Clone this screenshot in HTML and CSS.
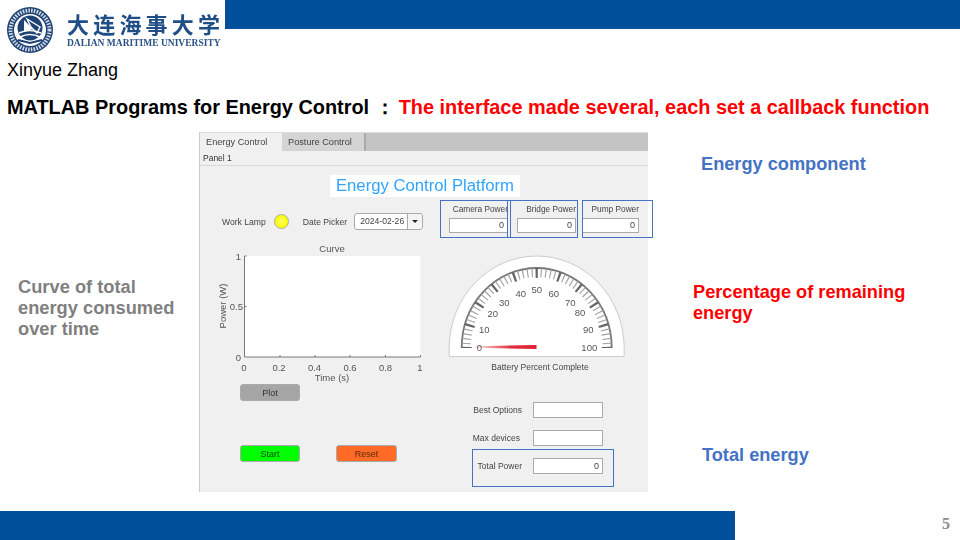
FILE: index.html
```html
<!DOCTYPE html>
<html lang="en">
  <head>
    <meta charset="UTF-8" />
    <meta name="viewport" content="width=device-width, initial-scale=1.0" />
    <title>MATLAB Programs for Energy Control</title>
    <link rel="stylesheet" href="styles.css">
  </head>
  <body>
    <div class="slide">
      <header class="top">
        <div class="logo">
          <svg class="seal" width="60" height="56" viewBox="0 0 60 56">
            <circle cx="30" cy="30" r="23" fill="#1d4273" />
            <circle cx="30" cy="30" r="19.5" fill="none" stroke="#cfd8e4" stroke-width="4" stroke-dasharray="1.6 1.2" />
            <circle cx="30" cy="30" r="16" fill="#fff" />
            <circle cx="30" cy="28" r="12.5" fill="#1d4273" />
            <path d="M24 20 L33 29 L24 32 Z" fill="#fff" />
            <path d="M27 19 L40 27 L37 33 L31 27 Z" fill="none" stroke="#fff" stroke-width="1.4" />
            <path d="M19 33 Q30 28 41 33 M20 37 Q30 32 40 37" fill="none" stroke="#fff" stroke-width="1.6" />
            <path d="M18 40 L30 43 L42 40" fill="none" stroke="#1d4273" stroke-width="2" />
          </svg>
          <div class="logo-text">
            <div class="logo-cn">大连海事大学</div>
            <div class="logo-en">DALIAN MARITIME UNIVERSITY</div>
          </div>
        </div>
        <div class="top-bar"></div>
      </header>

      <div class="author">Xinyue Zhang</div>
      <h1 class="title">MATLAB Programs for Energy Control ：<span class="title-red">The interface made several, each set a callback function</span></h1>

      <main class="middle">
        <div class="note-left">Curve of total energy consumed over time</div>

        <div class="app-wrap">
          <div class="app">
            <div class="tabs">
              <div class="tab tab-on">Energy Control</div>
              <div class="tab">Posture Control</div>
            </div>
            <div class="panel-label">Panel 1</div>
            <div class="heading">Energy Control Platform</div>
            <div class="app-body">
              <div class="col-left">
                <div class="lamp-row">
                  <span class="lamp-label">Work Lamp</span>
                  <span class="lamp"></span>
                  <span class="date-label">Date Picker</span>
                  <span class="date-picker">
                    <span class="date-value">2024-02-26</span>
                    <span class="date-btn"></span>
                  </span>
                </div>

                <svg class="chart" width="235" height="144" viewBox="0 0 235 144">
                  <rect x="44.5" y="16" width="176" height="101" fill="#fff" />
                  <path d="M44.5 16 V117 H220.5" fill="none" stroke="#777" stroke-width="1" />
                  <path d="M44.5 16 h2 M44.5 66.5 h2 M80 117 v-2 M115 117 v-2 M150 117 v-2 M185.500 117 v-2 M220.500 117 v-2" stroke="#777" stroke-width="1" />
                  <text class="chart-text" x="132" y="12" text-anchor="middle">Curve</text>
                  <text class="chart-text" x="41" y="20" text-anchor="end">1</text>
                  <text class="chart-text" x="43" y="70" text-anchor="end">0.5</text>
                  <text class="chart-text" x="41" y="120.500" text-anchor="end">0</text>
                  <text class="chart-text" x="44" y="130.500" text-anchor="middle">0</text>
                  <text class="chart-text" x="79" y="130.500" text-anchor="middle">0.2</text>
                  <text class="chart-text" x="114.500" y="130.500" text-anchor="middle">0.4</text>
                  <text class="chart-text" x="150" y="130.500" text-anchor="middle">0.6</text>
                  <text class="chart-text" x="185.500" y="130.500" text-anchor="middle">0.8</text>
                  <text class="chart-text" x="220" y="130.500" text-anchor="middle">1</text>
                  <text class="chart-text" x="132" y="141" text-anchor="middle">Time (s)</text>
                  <text class="chart-text" transform="translate(25.500 66) rotate(-90)" text-anchor="middle">Power (W)</text>
                </svg>

                <button class="btn btn-plot">Plot</button>
                <div class="btn-row">
                  <button class="btn btn-start">Start</button>
                  <button class="btn btn-reset">Reset</button>
                </div>
              </div>

              <div class="col-right">
                <div class="powers">
                  <div class="power power-a">
                    <div class="power-label">Camera Power</div>
                    <div class="field">0</div>
                  </div>
                  <div class="power power-a">
                    <div class="power-label">Bridge Power</div>
                    <div class="field">0</div>
                  </div>
                  <div class="power power-b">
                    <div class="power-label">Pump Power</div>
                    <div class="field">0</div>
                  </div>
                </div>

                <svg class="gauge" width="185" height="106" viewBox="0 0 185 106">
                  <defs>
                    <linearGradient id="needle" x1="0" x2="1" y1="0" y2="0">
                      <stop offset="0" stop-color="#e0202e" stop-opacity="0" />
                      <stop offset="0.6" stop-color="#e0303c" />
                      <stop offset="1" stop-color="#e0202e" />
                    </linearGradient>
                  </defs>
                  <path d="M4.200 104.500 V96 A87.500 92 0 0 1 179.200 96 V104.500 Z" fill="#fff" stroke="#ccc" stroke-width="1" />
                  <path d="M16.700 96 A75 80 0 0 1 166.700 96" fill="none" stroke="#777" stroke-width="1.800" />
                  <path d="M21.200 96 A70.500 75.500 0 0 1 162.200 96" fill="none" stroke="#a0a0a0" stroke-width="9" pathLength="1000" stroke-dasharray="5 15" stroke-dashoffset="2.500" />
                  <path d="M21.700 96 A70 75 0 0 1 161.700 96" fill="none" stroke="#666" stroke-width="10" pathLength="1000" stroke-dasharray="10 90" stroke-dashoffset="5" />
                  <polygon points="27,94.300 91.500,93 91.500,97 27,95.700" fill="url(#needle)" />
                  <text class="gauge-text" x="34.300" y="96">0</text>
                  <text class="gauge-text" x="39.300" y="78.700">10</text>
                  <text class="gauge-text" x="47.700" y="62">20</text>
                  <text class="gauge-text" x="59.300" y="51">30</text>
                  <text class="gauge-text" x="75.700" y="42">40</text>
                  <text class="gauge-text" x="91.700" y="38.300">50</text>
                  <text class="gauge-text" x="108.700" y="42">60</text>
                  <text class="gauge-text" x="125.300" y="51">70</text>
                  <text class="gauge-text" x="135" y="61.300">80</text>
                  <text class="gauge-text" x="143.300" y="78.700">90</text>
                  <text class="gauge-text" x="144.300" y="96">100</text>
                </svg>
                <div class="gauge-label">Battery Percent Complete</div>

                <div class="form">
                  <label class="form-label">Best Options</label>
                  <div class="field"></div>
                  <label class="form-label form-label-max">Max devices</label>
                  <div class="field"></div>
                  <label class="form-label">Total Power</label>
                  <div class="field">0</div>
                </div>
              </div>
            </div>
          </div>
          <div class="outline outline-camera"></div>
          <div class="outline outline-bridge"></div>
          <div class="outline outline-pump"></div>
          <div class="outline outline-total"></div>
        </div>

        <div class="notes-right">
          <div class="note note-blue note-energy">Energy component</div>
          <div class="note note-red">Percentage of remaining energy</div>
          <div class="note note-blue note-total">Total energy</div>
        </div>
      </main>

      <footer class="bottom">
        <div class="bottom-bar"></div>
        <div class="page-num">5</div>
      </footer>
    </div>
  </body>
</html>
```

FILE: styles.css
```css
* {
  box-sizing: border-box;
}

body {
  margin: 0;
  font-family: "Liberation Sans", Arial, sans-serif;
  background-color: white;
}

.slide {
  width: 960px;
  height: 540px;
  overflow: hidden;
  display: flex;
  flex-direction: column;
}

/* header */
.top {
  display: flex;
  height: 56px;
}

.logo {
  width: 225px;
  display: flex;
  filter: blur(0.4px);
}

.logo-text {
  padding: 8px 0 0 7px;
}

.logo-cn {
  font-family: "Noto Sans CJK SC", sans-serif;
  font-weight: 700;
  font-size: 22px;
  line-height: 30px;
  letter-spacing: 4.2px;
  color: #1f4d86;
  white-space: nowrap;
}

.logo-en {
  font-family: "Liberation Serif", serif;
  font-weight: 700;
  font-size: 9.500px;
  line-height: 11px;
  color: #2a5285;
  white-space: nowrap;
}

.top-bar {
  flex: 1;
  height: 29px;
  background-color: #004f9a;
}

.author {
  margin: 5px 0 0 7px;
  font-size: 18px;
  line-height: 18px;
  color: black;
}

.title {
  margin: 17px 0 0 7px;
  font-size: 19.900px;
  line-height: 22px;
  font-weight: 700;
  color: black;
  white-space: nowrap;
}

.title-red {
  color: #ff0000;
  margin-left: 4px;
}

/* middle row */
.middle {
  height: 360px;
  margin-top: 14px;
  display: grid;
  grid-template-columns: 199px 449px 1fr;
}

.note-left {
  margin-top: 144px;
  padding-left: 18px;
  width: 190px;
  font-size: 18.300px;
  line-height: 21px;
  font-weight: 700;
  color: #7f7f7f;
}

.notes-right {
  display: flex;
  flex-direction: column;
}

.note {
  font-size: 18.200px;
  line-height: 21px;
  font-weight: 700;
}

.note-blue {
  color: #4472c4;
}

.note-red {
  color: #ff0000;
  margin: 107px 0 0 45px;
  width: 230px;
}

.note-energy {
  margin: 22px 0 0 53px;
}

.note-total {
  margin: 121px 0 0 54px;
}

/* matlab app */
.app-wrap {
  position: relative;
}

.app {
  height: 360px;
  background-color: #f0f0f0;
  border-left: 1px solid #ccc;
  border-top: 1px solid #ddd;
  color: #444;
  filter: blur(0.45px);
}

.tabs {
  display: flex;
  height: 18px;
  background-color: #c4c4c4;
}

.tab {
  width: 84px;
  padding-left: 6px;
  font-size: 9.200px;
  line-height: 18px;
  background-color: #d4d4d4;
  border-right: 2px solid #aaa;
}

.tab-on {
  width: 82px;
  background-color: #f0f0f0;
  border-right: 0;
}

.panel-label {
  height: 15px;
  padding-left: 3px;
  font-size: 8.500px;
  line-height: 14px;
  color: #333;
  border-bottom: 1px solid #d8d8d8;
}

.heading {
  width: 190px;
  height: 22px;
  margin: 9px 0 0 130px;
  background-color: white;
  font-size: 16.700px;
  line-height: 22px;
  text-align: center;
  color: #2ea4ff;
  white-space: nowrap;
}

.app-body {
  display: flex;
}

.col-left {
  width: 240px;
}

.lamp-row {
  display: flex;
  align-items: center;
  height: 17px;
  margin-top: 16px;
  padding-left: 22px;
  font-size: 8.600px;
}

.lamp {
  width: 15px;
  height: 15px;
  margin-left: 8px;
  border-radius: 50%;
  border: 1px solid #aaa;
  background: radial-gradient(circle, #ffff66, #ffff00 70%);
}

.date-label {
  margin-left: 14px;
}

.date-picker {
  display: flex;
  width: 69px;
  height: 17px;
  margin-left: 7px;
  background-color: white;
  border: 1px solid #aaa;
  border-radius: 3px;
}

.date-value {
  flex: 1;
  padding-left: 5px;
  line-height: 15px;
  white-space: nowrap;
}

.date-btn {
  width: 15px;
  position: relative;
  border-left: 1px solid #aaa;
  background-color: #f4f4f4;
  border-radius: 0 3px 3px 0;
}

.date-btn::after {
  content: "";
  position: absolute;
  left: 4px;
  top: 6px;
  border-left: 3px solid transparent;
  border-right: 3px solid transparent;
  border-top: 3px solid #222;
}

.chart {
  display: block;
  margin-top: 10px;
}

.chart-text {
  font-size: 9.500px;
  fill: #555;
}

.btn {
  display: block;
  height: 17px;
  width: 60px;
  padding: 0;
  font-family: inherit;
  font-size: 9px;
  color: #333;
  border: 1px solid #aaa;
  border-radius: 3px;
}

.btn-plot {
  margin-left: 40px;
  background-color: #a5a5a5;
}

.btn-row {
  display: flex;
  gap: 36px;
  margin: 44px 0 0 40px;
}

.btn-start {
  background-color: #00ff00;
  color: #0a4a0a;
}

.btn-reset {
  width: 61px;
  background-color: #ff6a26;
  color: #5a2a10;
}

.col-right {
  flex: 1;
}

.powers {
  display: flex;
  gap: 9px;
  margin: 6px 0 0 9px;
}

.power {
  width: 59px;
}

.power-b {
  width: 57px;
  margin-left: -3px;
}

.power-label {
  height: 15px;
  font-size: 8.300px;
  line-height: 12px;
  text-align: right;
  white-space: nowrap;
}

.field {
  height: 15px;
  padding-right: 3px;
  background-color: white;
  border: 1px solid #aaa;
  font-size: 9px;
  line-height: 13px;
  text-align: right;
}

.gauge {
  display: block;
  margin: 19px 0 0 5px;
}

.gauge-text {
  font-size: 9.500px;
  fill: #555;
  text-anchor: middle;
  dominant-baseline: middle;
}

.gauge-label {
  margin: 3px 0 0;
  width: 200px;
  font-size: 8.500px;
  line-height: 12px;
  text-align: center;
}

.form {
  display: grid;
  grid-template-columns: 82px 70px;
  column-gap: 11px;
  row-gap: 12px;
  margin-top: 29px;
}

.form .field {
  height: 16px;
  line-height: 14px;
}

.form-label {
  padding-top: 1px;
  font-size: 8.500px;
  line-height: 15px;
  text-align: right;
}

.form-label-max {
  padding-right: 2px;
}

/* blue callout boxes drawn over the app */
.outline {
  position: absolute;
  border: 1px solid #4472c4;
  top: 68px;
  height: 38px;
  width: 71px;
}

.outline-camera {
  left: 241px;
}

.outline-bridge {
  left: 308px;
}

.outline-pump {
  left: 383px;
}

.outline-total {
  left: 273px;
  top: 317px;
  width: 142px;
}

/* footer */
.bottom {
  display: flex;
  margin-top: 19px;
  height: 29px;
}

.bottom-bar {
  width: 735px;
  background-color: #004f9a;
}

.page-num {
  flex: 1;
  padding-right: 10px;
  font-family: "Liberation Serif", serif;
  font-size: 16px;
  font-weight: 700;
  line-height: 26px;
  text-align: right;
  color: #8c8c8c;
}
```
